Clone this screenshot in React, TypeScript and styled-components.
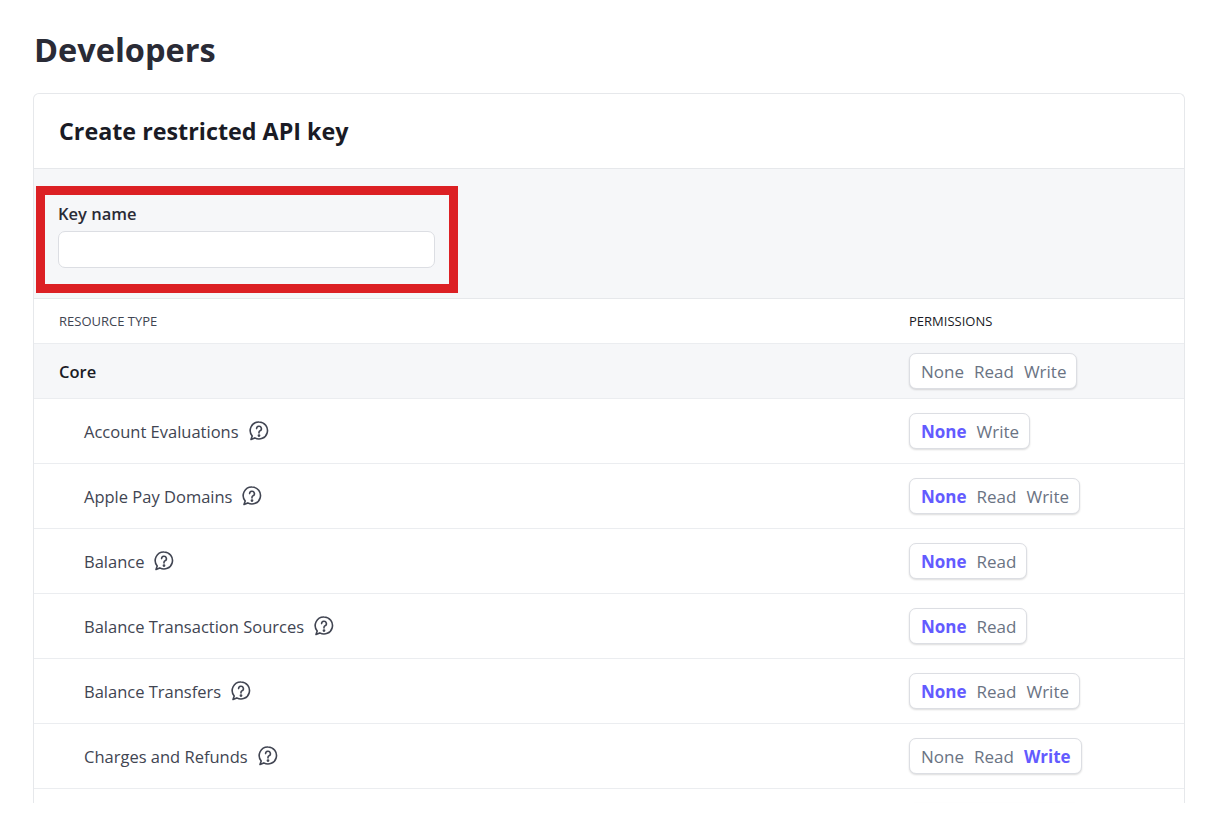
import React from "react";
import styled, { createGlobalStyle } from "styled-components";

const Global = createGlobalStyle`
  html, body { margin: 0; padding: 0; background: #fff; }
  body { font-family: "Open Sans", "Noto Sans", sans-serif; color: #30313d; }
`;

const Page = styled.div`
  height: 803px;
  overflow: hidden;
  padding: 0 35px 0 33px;
`;
const Title = styled.h1`
  margin: 0;
  padding: 30px 0 0 1px;
  height: 93px;
  box-sizing: border-box;
  font-size: 32.5px;
  font-weight: 700;
  color: #2a2b36;
  line-height: 1.2;
`;
const Card = styled.div`
  border: 1px solid #e6e8eb;
  border-bottom: none;
  border-radius: 6px 6px 0 0;
`;
const CardHeader = styled.div`
  height: 74px;
  display: flex;
  align-items: center;
  padding-left: 25px;
  font-size: 23.3px;
  font-weight: 700;
  color: #1a1b25;
  border-bottom: 1px solid #e6e8eb;
`;
const KeySection = styled.div`
  background: #f6f7f9;
  height: 130px;
  padding-top: 17px;
  box-sizing: border-box;
  border-bottom: 1px solid #e6e8eb;
`;
const Highlight = styled.div`
  margin-left: 2px;
  width: 422px;
  height: 107px;
  box-sizing: border-box;
  border: 9px solid #dc2024;
  padding: 7px 14px 0 13px;
  display: flex;
  flex-direction: column;
  gap: 6px;
`;
const Label = styled.label`
  font-size: 16.5px;
  font-weight: 600;
  color: #2a2b36;
`;
const Input = styled.input`
  height: 37px;
  box-sizing: border-box;
  width: 377px;
  border: 1px solid #dcdee3;
  border-radius: 7px;
  background: #fff;
`;
const Row = styled.div<{ $h: number; $gray?: boolean }>`
  display: flex;
  align-items: center;
  height: ${(p) => p.$h}px;
  box-sizing: border-box;
  border-bottom: 1px solid #ebedf0;
  background: ${(p) => (p.$gray ? "#f6f7f9" : "#fff")};
`;
const Name = styled.div<{ $indent?: boolean; $bold?: boolean; $small?: boolean }>`
  flex: 1;
  display: flex;
  align-items: center;
  gap: 9px;
  padding-left: ${(p) => (p.$indent ? 50 : 25)}px;
  font-size: ${(p) => (p.$small ? "13px" : "16.5px")};
  font-weight: ${(p) => (p.$bold ? 600 : 400)};
  color: ${(p) => (p.$bold ? "#1a1b25" : "#414552")};
`;
const PermCol = styled.div<{ $small?: boolean }>`
  width: 275px;
  font-size: ${(p) => (p.$small ? "13px" : "16px")};
  color: #1a1b25;
`;
const Seg = styled.div`
  display: inline-flex;
  gap: 10px;
  padding: 0 10px 0 11px;
  height: 36px;
  align-items: center;
  border-radius: 7px;
  background: #fff;
  border: 1px solid #dcdee3;
  box-shadow: 0 1px 2px rgba(0, 0, 0, 0.14);
  box-sizing: border-box;
`;
const Opt = styled.span<{ $on?: boolean }>`
  font-size: 17px;
  font-weight: ${(p) => (p.$on ? 700 : 500)};
  color: ${(p) => (p.$on ? "#635bff" : "#6a7383")};
`;

const Help = () => (
  <svg width="22" height="22" viewBox="0 0 22 22" fill="none" stroke="#414552" strokeWidth="1.6">
    <path d="M11 2a8.5 8.5 0 1 1-4.2 15.9L3 19.5l1.2-3.6A8.5 8.5 0 0 1 11 2z" strokeLinejoin="round" />
    <path d="M8.6 8.6a2.4 2.4 0 1 1 3.4 2.2c-.7.3-1 .8-1 1.5v.6" strokeLinecap="round" />
    <circle cx="11" cy="15.6" r="0.6" fill="#414552" />
  </svg>
);

type R = { name: string; opts: string[]; on: string };
const rows: R[] = [
  { name: "Account Evaluations", opts: ["None", "Write"], on: "None" },
  { name: "Apple Pay Domains", opts: ["None", "Read", "Write"], on: "None" },
  { name: "Balance", opts: ["None", "Read"], on: "None" },
  { name: "Balance Transaction Sources", opts: ["None", "Read"], on: "None" },
  { name: "Balance Transfers", opts: ["None", "Read", "Write"], on: "None" },
  { name: "Charges and Refunds", opts: ["None", "Read", "Write"], on: "Write" },
  { name: "Checkout Sessions", opts: ["None", "Read", "Write"], on: "None" },
];

export default function App() {
  return (
    <Page>
      <Global />
      <Title>Developers</Title>
      <Card>
        <CardHeader>Create restricted API key</CardHeader>
        <KeySection>
          <Highlight>
            <Label>Key name</Label>
            <Input />
          </Highlight>
        </KeySection>
        <Row $h={45}>
          <Name $small>RESOURCE TYPE</Name>
          <PermCol $small>PERMISSIONS</PermCol>
        </Row>
        <Row $h={55} $gray>
          <Name $bold>Core</Name>
          <PermCol>
            <Seg>
              <Opt>None</Opt>
              <Opt>Read</Opt>
              <Opt>Write</Opt>
            </Seg>
          </PermCol>
        </Row>
        {rows.map((r) => (
          <Row $h={65} key={r.name}>
            <Name $indent>
              {r.name}
              <Help />
            </Name>
            <PermCol>
              <Seg>
                {r.opts.map((o) => (
                  <Opt key={o} $on={o === r.on}>
                    {o}
                  </Opt>
                ))}
              </Seg>
            </PermCol>
          </Row>
        ))}
      </Card>
    </Page>
  );
}
